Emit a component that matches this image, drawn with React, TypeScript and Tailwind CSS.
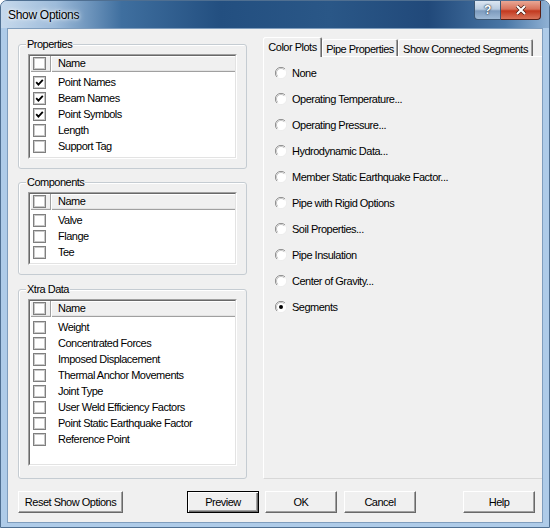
import React from "react";

const font = { fontFamily: '"Liberation Sans", Arial, sans-serif' };

function CheckBox({ checked = false }: { checked?: boolean }) {
  return (
    <div className="flex size-[13px] shrink-0 items-center justify-center border border-[#7f7f7f] bg-white shadow-[inset_0_0_0_1px_#c9c9c9]">
      {checked && (
        <svg width="9" height="9" viewBox="0 0 9 9">
          <path d="M1.2 4.2 L3.4 6.6 L7.8 1.8" fill="none" stroke="#000" strokeWidth="1.8" />
        </svg>
      )}
    </div>
  );
}

function Radio({ checked = false }: { checked?: boolean }) {
  return (
    <svg width="12" height="12" viewBox="0 0 12 12" className="shrink-0">
      <circle cx="6" cy="6" r="5.5" fill="#fff" />
      <path d="M10 2 A5.5 5.5 0 0 0 2 10" fill="none" stroke="#8d8d8d" strokeWidth="1" />
      <path d="M9.2 2.8 A4.5 4.5 0 0 0 2.8 9.2" fill="none" stroke="#c4c4c4" strokeWidth="1" />
      <path d="M10 2 A5.5 5.5 0 0 1 2 10" fill="none" stroke="#ededed" strokeWidth="1" />
      {checked && <circle cx="6" cy="6" r="2" fill="#000" />}
    </svg>
  );
}

function Group({
  title,
  height,
  listHeight,
  items,
  className = "",
}: {
  title: string;
  height: number;
  listHeight: number;
  items: { label: string; checked?: boolean }[];
  className?: string;
}) {
  return (
    <div
      className={`relative w-[229px] rounded-[3px] border border-[#c5ccd2] px-[9px] pt-[9px] shadow-[inset_1px_1px_0_#fff] ${className}`}
      style={{ height }}
    >
      <span className="absolute -top-[7px] left-[7px] bg-[#f0f0f0] px-[1px] leading-[13px]">
        {title}
      </span>
      <div
        className="flex flex-col border border-t-[#a0a0a0] border-l-[#a0a0a0] border-r-white border-b-white bg-white"
        style={{ height: listHeight }}
      >
        <div className="flex h-full flex-col border border-t-[#696969] border-l-[#696969] border-r-[#e3e3e3] border-b-[#e3e3e3]">
          <div className="flex h-[16px] shrink-0 bg-[#f0f0f0] shadow-[inset_0_-1px_0_#a0a0a0,inset_0_-2px_0_#e3e3e3]">
            <div className="flex w-[21px] items-start pl-[3px] pt-[1px] shadow-[inset_-1px_0_0_#a0a0a0,inset_1px_1px_0_#fff]">
              <CheckBox />
            </div>
            <div className="flex-1 pl-[7px] leading-[15px] shadow-[inset_1px_1px_0_#fff]">Name</div>
          </div>
          <div className="flex flex-col pt-[2px]">
            {items.map((it) => (
              <div key={it.label} className="flex h-[16px] items-center pl-[3px]">
                <CheckBox checked={it.checked} />
                <span className="ml-[12px]">{it.label}</span>
              </div>
            ))}
          </div>
        </div>
      </div>
    </div>
  );
}

function Button({ label, isDefault = false, width = 72 }: { label: string; isDefault?: boolean; width?: number }) {
  return (
    <div
      className={`flex h-[22px] shrink-0 items-center justify-center bg-[#f0f0f0] ${
        isDefault
          ? "border border-black shadow-[inset_1px_1px_0_#fff,inset_-1px_-1px_0_#696969,inset_-2px_-2px_0_#a0a0a0]"
          : "border border-t-white border-l-white border-r-[#696969] border-b-[#696969] shadow-[inset_-1px_-1px_0_#a0a0a0]"
      }`}
      style={{ width }}
    >
      {label}
    </div>
  );
}

const properties = [
  { label: "Point Names", checked: true },
  { label: "Beam Names", checked: true },
  { label: "Point Symbols", checked: true },
  { label: "Length" },
  { label: "Support Tag" },
];

const components = [{ label: "Valve" }, { label: "Flange" }, { label: "Tee" }];

const xtra = [
  { label: "Weight" },
  { label: "Concentrated Forces" },
  { label: "Imposed Displacement" },
  { label: "Thermal Anchor Movements" },
  { label: "Joint Type" },
  { label: "User Weld Efficiency Factors" },
  { label: "Point Static Earthquake Factor" },
  { label: "Reference Point" },
];

const plots = [
  "None",
  "Operating Temperature...",
  "Operating Pressure...",
  "Hydrodynamic Data...",
  "Member Static Earthquake Factor...",
  "Pipe with Rigid Options",
  "Soil Properties...",
  "Pipe Insulation",
  "Center of Gravity...",
  "Segments",
];

export default function App() {
  return (
    <div
      className="flex h-[528px] w-[550px] flex-col overflow-hidden rounded-t-[7px] border border-[#4f6f91] bg-[#aecbe8] text-[11px] tracking-[-0.5px] text-black"
      style={font}
    >
      {/* Title bar */}
      <div className="flex h-[27px] shrink-0 items-start justify-between bg-[linear-gradient(90deg,#c6d9ec_0%,#9dbbda_10%,#3f6f9f_22%,#234f80_40%,#2a5787_60%,#21497a_78%,#4a77a6_92%,#8fb1d4_100%)]">
        <span className="ml-[7px] mt-[6px] text-[12px] tracking-[-0.3px] leading-[16px] text-black [text-shadow:0_0_6px_#fff,0_0_3px_#fff]">
          Show Options
        </span>
        <div className="mr-[8px] flex">
          <div className="flex h-[19px] w-[27px] items-center justify-center rounded-bl-[4px] border border-t-0 border-[#3b5672] bg-[linear-gradient(180deg,#dce7f2_0%,#b8cbe0_45%,#7d9bbd_55%,#9fbad6_100%)] text-[12px] font-bold text-white [text-shadow:0_0_2px_#1b2c3f,0_0_1px_#1b2c3f]">
            ?
          </div>
          <div className="flex h-[19px] w-[40px] items-center justify-center rounded-br-[4px] border border-l-0 border-t-0 border-[#5a1e14] bg-[linear-gradient(180deg,#e9a795_0%,#d8725a_45%,#c2391f_55%,#d9745a_100%)]">
            <svg width="12" height="10" viewBox="0 0 12 10">
              <path d="M2 1 L10 9 M10 1 L2 9" stroke="#3a1108" strokeWidth="3.4" />
              <path d="M2 1 L10 9 M10 1 L2 9" stroke="#fff" strokeWidth="2.2" />
            </svg>
          </div>
        </div>
      </div>

      {/* Client area */}
      <div className="mx-[6px] flex h-[495px] shrink-0 flex-col overflow-hidden border border-[#7f9dbd] bg-[#f0f0f0]">
        <div className="flex pl-[10px] pt-[8px]">
          {/* Left column */}
          <div className="mt-[7px] flex flex-col">
            <Group title="Properties" height={125} listHeight={105} items={properties} />
            <Group title="Components" height={93} listHeight={73} items={components} className="mt-[13px]" />
            <Group title="Xtra Data" height={190} listHeight={167} items={xtra} className="mt-[14px]" />
          </div>

          {/* Tabs */}
          <div className="ml-[16px] flex w-[300px] shrink-0 flex-col">
            <div className="flex h-[19px] items-end">
              <div className="relative z-10 -mb-[1px] flex h-[20px] w-[59px] items-start justify-center rounded-t-[2px] bg-[#f0f0f0] pt-[2px] shadow-[inset_1px_1px_0_#fff,inset_-1px_0_0_#696969,inset_-2px_0_0_#a0a0a0]">
                Color Plots
              </div>
              <div className="flex h-[17px] w-[76px] items-start justify-center rounded-t-[2px] pt-[2px] shadow-[inset_1px_1px_0_#fff,inset_-1px_0_0_#696969,inset_-2px_0_0_#a0a0a0]">
                Pipe Properties
              </div>
              <div className="flex h-[17px] w-[135px] items-start justify-center rounded-t-[2px] pt-[2px] shadow-[inset_1px_1px_0_#fff,inset_-1px_0_0_#696969,inset_-2px_0_0_#a0a0a0]">
                Show Connected Segments
              </div>
            </div>
            <div className="flex h-[423px] flex-col border border-r-0 border-t-white border-l-white border-b-[#d8d8d8] pl-[11px] pt-[3px]">
              {plots.map((p, i) => (
                <div key={p} className="flex h-[26px] items-center">
                  <Radio checked={i === plots.length - 1} />
                  <span className="ml-[5px]">{p}</span>
                </div>
              ))}
            </div>
          </div>
        </div>

        {/* Buttons */}
        <div className="mt-[12px] flex pl-[10px]">
          <Button label="Reset Show Options" width={105} />
          <div className="ml-[64px]">
            <Button label="Preview" isDefault />
          </div>
          <div className="ml-[6px]">
            <Button label="OK" />
          </div>
          <div className="ml-[7px]">
            <Button label="Cancel" />
          </div>
          <div className="ml-[47px]">
            <Button label="Help" />
          </div>
        </div>
      </div>
    </div>
  );
}
